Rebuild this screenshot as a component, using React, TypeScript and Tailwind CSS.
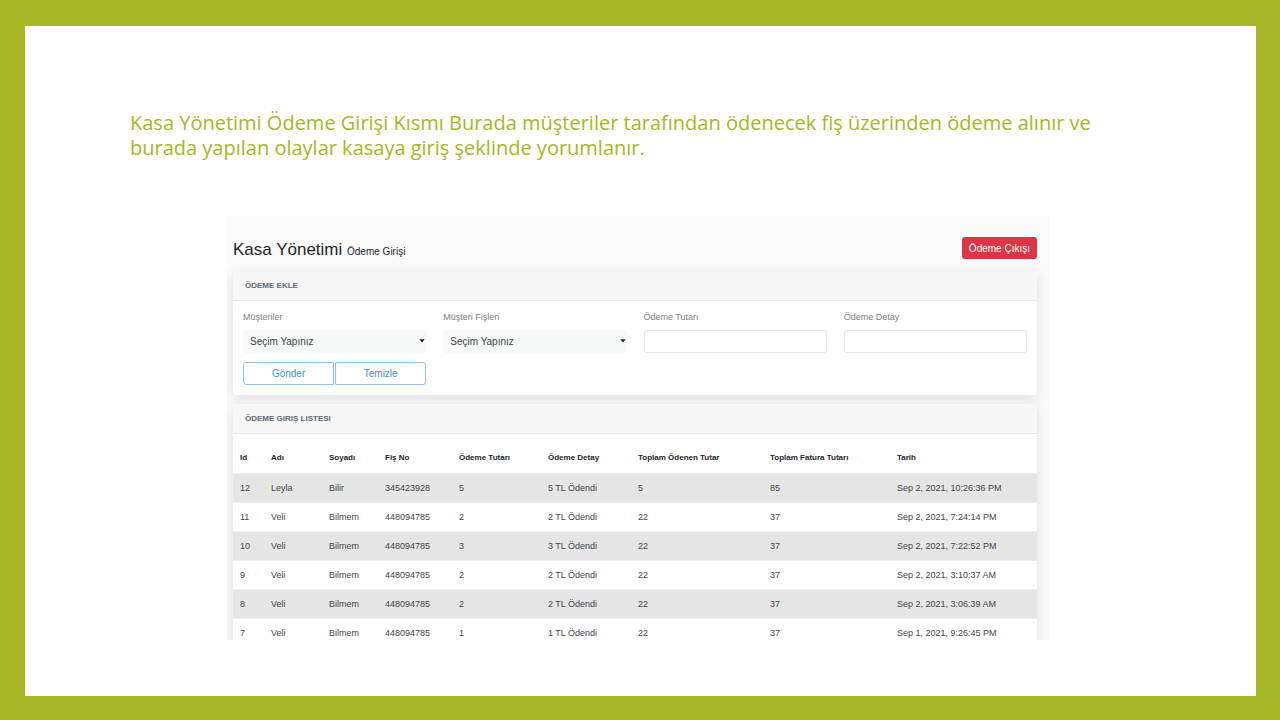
import React from "react";

type Payment = {
  id: number;
  name: string;
  surname: string;
  receipt: string;
  amount: number;
  detail: string;
  paid: number;
  invoice: number;
  date: string;
};

const payments: Payment[] = [
  { id: 12, name: "Leyla", surname: "Bilir", receipt: "345423928", amount: 5, detail: "5 TL Ödendi", paid: 5, invoice: 85, date: "Sep 2, 2021, 10:26:36 PM" },
  { id: 11, name: "Veli", surname: "Bilmem", receipt: "448094785", amount: 2, detail: "2 TL Ödendi", paid: 22, invoice: 37, date: "Sep 2, 2021, 7:24:14 PM" },
  { id: 10, name: "Veli", surname: "Bilmem", receipt: "448094785", amount: 3, detail: "3 TL Ödendi", paid: 22, invoice: 37, date: "Sep 2, 2021, 7:22:52 PM" },
  { id: 9, name: "Veli", surname: "Bilmem", receipt: "448094785", amount: 2, detail: "2 TL Ödendi", paid: 22, invoice: 37, date: "Sep 2, 2021, 3:10:37 AM" },
  { id: 8, name: "Veli", surname: "Bilmem", receipt: "448094785", amount: 2, detail: "2 TL Ödendi", paid: 22, invoice: 37, date: "Sep 2, 2021, 3:06:39 AM" },
  { id: 7, name: "Veli", surname: "Bilmem", receipt: "448094785", amount: 1, detail: "1 TL Ödendi", paid: 22, invoice: 37, date: "Sep 1, 2021, 9:26:45 PM" },
];

const columns = [
  { title: "Id", width: "w-[31px]" },
  { title: "Adı", width: "w-[58px]" },
  { title: "Soyadı", width: "w-[56px]" },
  { title: "Fiş No", width: "w-[74px]" },
  { title: "Ödeme Tutarı", width: "w-[89px]" },
  { title: "Ödeme Detay", width: "w-[90px]" },
  { title: "Toplam Ödenen Tutar", width: "w-[132px]" },
  { title: "Toplam Fatura Tutarı", width: "w-[127px]" },
  { title: "Tarih", width: "w-[147px]" },
];

function Card({ title, children }: { title: string; children: React.ReactNode }) {
  return (
    <section className="rounded-[3px] bg-white shadow-[0_3px_12px_rgba(70,90,90,0.16)]">
      <h3 className="flex h-[30px] items-center rounded-t-[3px] border-b border-[#e2e4e5] bg-[#f7f7f7] px-3 text-[8px] font-bold text-[#5c6779]">
        {title}
      </h3>
      {children}
    </section>
  );
}

function SelectField({ id, label }: { id: string; label: string }) {
  return (
    <div className="flex flex-col">
      <label htmlFor={id} className="mb-[7px] text-[9px] leading-3 text-[#7b7f80]">
        {label}
      </label>
      <div className="relative">
        <select id={id} className="block h-[23px] w-full appearance-none rounded-[3px] bg-[#f7f9f9] px-[7px] text-[10px] text-[#3a3f42]">
          <option>Seçim Yapınız</option>
        </select>
        <svg viewBox="0 0 6 4" className="pointer-events-none absolute top-[9px] right-[1px] h-1 w-1.5" fill="#212529">
          <path d="M0.3 0.3h5.4L3 3.5z" />
        </svg>
      </div>
    </div>
  );
}

function TextField({ id, label }: { id: string; label: string }) {
  return (
    <div className="flex flex-col">
      <label htmlFor={id} className="mb-[7px] text-[9px] leading-3 text-[#7b7f80]">
        {label}
      </label>
      <input id={id} type="text" className="h-[23px] w-full rounded-[3px] border border-[#e2e8ea] bg-white px-2 text-[10px]" />
    </div>
  );
}

const outlineButton = "h-[23px] flex-1 border border-[#8fc1f5] bg-white text-[10px] text-[#3d8bea]";

export default function App() {
  return (
    <div className="flex h-screen flex-col bg-[#a5b726] pt-[26px] pr-6 pb-6 pl-[25px]">
      <main className="flex min-h-0 flex-1 flex-col bg-white pb-14 font-['Liberation_Sans',sans-serif]">
        <h1 className="mx-[105px] mt-[84px] font-['Open_Sans',sans-serif] text-[20px] leading-[25px] text-[#a5b726]">
          Kasa Yönetimi Ödeme Girişi Kısmı Burada müşteriler tarafından ödenecek fiş üzerinden ödeme alınır ve
          burada yapılan olaylar kasaya giriş şeklinde yorumlanır.
        </h1>

        <div className="mt-14 mr-[206px] ml-[202px] min-h-0 flex-1 overflow-hidden bg-[#fafafa] pr-[13px] pl-1.5">
          <header className="flex items-start justify-between pt-[21px] pb-1.5">
            <h2 className="text-[17px] leading-[26px] text-[#212529]">
              Kasa Yönetimi <small className="text-[10px]">Ödeme Girişi</small>
            </h2>
            <button type="button" className="h-[22px] rounded-[3px] bg-[#dc3545] px-[7px] text-[10px] text-white">
              Ödeme Çıkışı
            </button>
          </header>

          <div className="flex flex-col gap-[9px]">
            <Card title="ÖDEME EKLE">
              <form className="p-[10px]" onSubmit={(e) => e.preventDefault()}>
                <div className="grid grid-cols-4 gap-x-[17px] gap-y-[9px]">
                  <SelectField id="customers" label="Müşteriler" />
                  <SelectField id="receipts" label="Müşteri Fişleri" />
                  <TextField id="amount" label="Ödeme Tutarı" />
                  <TextField id="detail" label="Ödeme Detay" />
                  <div className="flex gap-px">
                    <button type="submit" className={`${outlineButton} rounded-l-[3px]`}>
                      Gönder
                    </button>
                    <button type="reset" className={`${outlineButton} rounded-r-[3px]`}>
                      Temizle
                    </button>
                  </div>
                </div>
              </form>
            </Card>

            <Card title="ÖDEME GIRIŞ LISTESI">
              <table className="w-full table-fixed border-collapse text-left text-[#212529]">
                <thead>
                  <tr className="h-[39px]">
                    {columns.map((c) => (
                      <th key={c.title} className={`${c.width} px-[7px] pt-[9px] text-[8px] leading-3 font-bold whitespace-nowrap`}>
                        {c.title}
                      </th>
                    ))}
                  </tr>
                </thead>
                <tbody className="text-[9px] leading-3 whitespace-nowrap text-[#3f4447]">
                  {payments.map((p) => (
                    <tr key={p.id} className="h-[29px] border-t border-[#eceeef] odd:bg-[#e5e5e5]">
                      {Object.values(p).map((value, i) => (
                        <td key={columns[i].title} className="px-[7px] py-0">
                          {value}
                        </td>
                      ))}
                    </tr>
                  ))}
                </tbody>
              </table>
            </Card>
          </div>
        </div>
      </main>
    </div>
  );
}
